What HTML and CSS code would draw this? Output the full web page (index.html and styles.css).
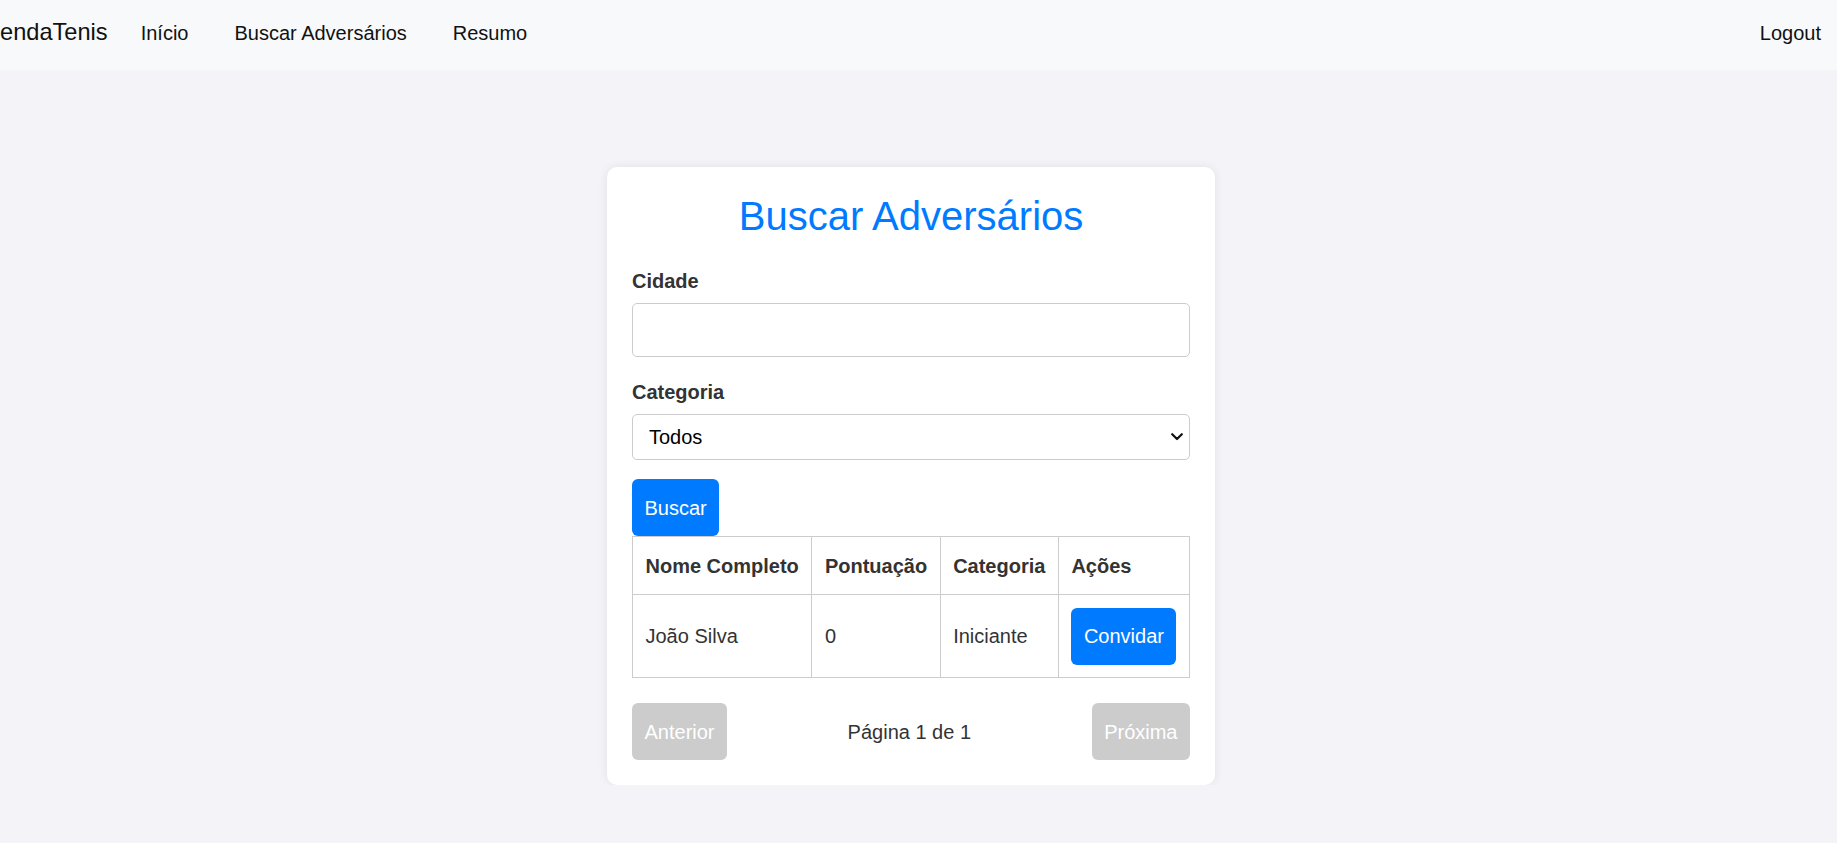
FILE: index.html
```html
<!DOCTYPE html>
<html lang="pt-BR">
<head>
<meta charset="utf-8">
<title>Buscar Adversários</title>
<link rel="stylesheet" href="styles.css">
</head>
<body>
<nav class="navbar">
  <a class="brand" href="#">AgendaTenis</a>
  <ul class="nav-links">
    <li><a href="#">Início</a></li>
    <li><a href="#">Buscar Adversários</a></li>
    <li><a href="#">Resumo</a></li>
  </ul>
  <a class="logout" href="#">Logout</a>
</nav>
<main class="main">
  <section class="card">
    <h2 class="title">Buscar Adversários</h2>
    <div class="form-group">
      <label class="label" for="cidade">Cidade</label>
      <input class="input" id="cidade" type="text">
    </div>
    <div class="form-group form-group-last">
      <label class="label" for="categoria">Categoria</label>
      <div class="select-wrap">
        <select class="select" id="categoria">
          <option>Todos</option>
          <option>Iniciante</option>
          <option>Intermediário</option>
          <option>Avançado</option>
        </select>
        <svg class="chevron" width="12" height="8" viewBox="0 0 12 8"><polyline points="1.2,1.2 6,6 10.8,1.2" fill="none" stroke="#111" stroke-width="2.2" stroke-linecap="round" stroke-linejoin="round"/></svg>
      </div>
    </div>
    <button class="btn btn-primary" type="button">Buscar</button>
    <table class="table">
      <thead>
        <tr>
          <th>Nome Completo</th>
          <th>Pontuação</th>
          <th>Categoria</th>
          <th>Ações</th>
        </tr>
      </thead>
      <tbody>
        <tr>
          <td>João Silva</td>
          <td>0</td>
          <td>Iniciante</td>
          <td><button class="btn btn-primary" type="button">Convidar</button></td>
        </tr>
      </tbody>
    </table>
    <div class="pagination">
      <button class="btn btn-disabled" type="button" disabled>Anterior</button>
      <span class="page-info">Página 1 de 1</span>
      <button class="btn btn-disabled" type="button" disabled>Próxima</button>
    </div>
  </section>
</main>
</body>
</html>
```

FILE: styles.css
```css
* {
  box-sizing: border-box;
}

html, body {
  margin: 0;
  padding: 0;
}

body {
  font-family: "Liberation Sans", Arial, sans-serif;
  font-size: 20px;
  line-height: 1.6;
  color: #333;
  background: #f4f4f8;
  overflow: hidden;
}

.navbar {
  height: 70px;
  background: #f8f9fa;
  display: flex;
  align-items: center;
  padding: 0 16px 4px 0;
}

.brand {
  font-size: 23.6px;
  color: #111;
  text-decoration: none;
  margin-left: -28.8px;
  margin-right: 10px;
}

.nav-links {
  list-style: none;
  margin: 0;
  padding: 0;
  display: flex;
}

.nav-links a {
  display: block;
  padding: 0 23px;
  color: #111;
  text-decoration: none;
}

.logout {
  margin-left: auto;
  color: #111;
  text-decoration: none;
}

.main {
  display: flex;
  justify-content: center;
  padding: 97px 15px 0 0;
}

.card {
  width: 608px;
  background: #fff;
  border-radius: 10px;
  padding: 25px;
  box-shadow: 0 0 10px rgba(0, 0, 0, 0.08);
}

.title {
  margin: 0 0 25px;
  font-size: 40px;
  line-height: 48px;
  font-weight: normal;
  color: #007bff;
  text-align: center;
}

.form-group {
  margin-bottom: 19px;
}

.form-group-last {
  margin-bottom: 19px;
}

.label {
  display: block;
  font-weight: bold;
  color: #333;
  margin-bottom: 6px;
}

.input {
  display: block;
  width: 100%;
  height: 54px;
  border: 1px solid #ccc;
  border-radius: 5px;
  padding: 0 16px;
  font: inherit;
  background: #fff;
}

.select-wrap {
  position: relative;
}

.select {
  display: block;
  width: 100%;
  height: 46px;
  border: 1px solid #ccc;
  border-radius: 5px;
  padding: 0 16px;
  font-family: inherit;
  font-size: 20px;
  color: #000;
  background: #fff;
  appearance: none;
  -webkit-appearance: none;
}

.chevron {
  position: absolute;
  right: 7px;
  top: 19px;
  pointer-events: none;
}

.btn {
  font-family: inherit;
  font-size: 20px;
  line-height: 32px;
  padding: 12.5px;
  border: none;
  border-radius: 6px;
  color: #fff;
  display: inline-block;
  vertical-align: top;
}

.btn-primary {
  background: #007bff;
}

.btn-disabled {
  background: #ccc;
  color: #fff;
}

.table {
  width: 100%;
  border-collapse: collapse;
  margin-top: 0;
}

.table th,
.table td {
  border: 1px solid #ccc;
  padding: 12.5px;
  text-align: left;
  vertical-align: middle;
  color: #333;
}

.table th {
  font-weight: bold;
}

.pagination {
  margin-top: 25px;
  display: flex;
  justify-content: space-between;
  align-items: center;
}

.page-info {
  color: #333;
}
```
